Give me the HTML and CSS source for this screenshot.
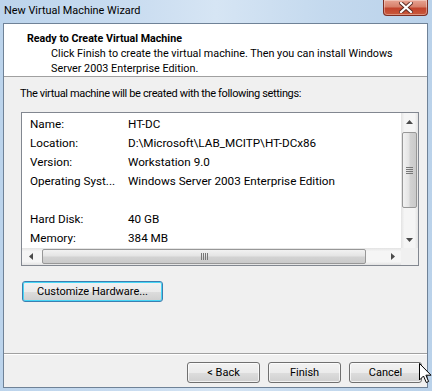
FILE: index.html
```html
<!DOCTYPE html>
<html>
<head>
<meta charset="utf-8">
<link rel="stylesheet" href="styles.css">
</head>
<body>
<div class="frame">
  <div class="titlebar">
    <span class="title">New Virtual Machine Wizard</span>
    <div class="close">
      <svg width="14" height="11" viewBox="0 0 14 11"><path d="M2 1 L12 10 M12 1 L2 10" stroke="#5a2a22" stroke-width="4" stroke-linecap="square"/><path d="M2 1 L12 10 M12 1 L2 10" stroke="#fff" stroke-width="2.2" stroke-linecap="square"/></svg>
    </div>
  </div>
  <div class="client">
    <div class="header">
      <div class="h-title">Ready to Create Virtual Machine</div>
      <div class="h-sub">Click Finish to create the virtual machine. Then you can install Windows<br>Server 2003 Enterprise Edition.</div>
    </div>
    <div class="body">
      <div class="intro">The virtual machine will be created with the following settings:</div>
      <div class="listbox">
        <div class="list-content">
          <div class="row"><span>Name:</span><span>HT-DC</span></div>
          <div class="row"><span>Location:</span><span>D:\Microsoft\LAB_MCITP\HT-DCx86</span></div>
          <div class="row"><span>Version:</span><span>Workstation 9.0</span></div>
          <div class="row"><span>Operating Syst...</span><span>Windows Server 2003 Enterprise Edition</span></div>
          <div class="row"></div>
          <div class="row"><span>Hard Disk:</span><span>40 GB</span></div>
          <div class="row"><span>Memory:</span><span>384 MB</span></div>
        </div>
        <div class="vscroll">
          <div class="arrow"><svg width="7" height="4" viewBox="0 0 7 4"><polygon points="3.5,0 7,4 0,4" fill="#4a4a4a"/></svg></div>
          <div class="vthumb"><svg width="7" height="7" viewBox="0 0 7 7"><path d="M0 .5H7M0 2.5H7M0 4.5H7M0 6.5H7" stroke="#777" stroke-width="1"/></svg></div>
          <div class="spacer"></div>
          <div class="arrow"><svg width="7" height="4" viewBox="0 0 7 4"><polygon points="0,0 7,0 3.5,4" fill="#4a4a4a"/></svg></div>
        </div>
        <div class="hscroll">
          <div class="arrow"><svg width="4" height="7" viewBox="0 0 4 7"><polygon points="0,3.5 4,0 4,7" fill="#4a4a4a"/></svg></div>
          <div class="hthumb"><svg width="7" height="7" viewBox="0 0 7 7"><path d="M.5 0V7M2.5 0V7M4.5 0V7M6.5 0V7" stroke="#777" stroke-width="1"/></svg></div>
          <div class="spacer"></div>
          <div class="arrow"><svg width="4" height="7" viewBox="0 0 4 7"><polygon points="0,0 4,3.5 0,7" fill="#4a4a4a"/></svg></div>
        </div>
        <div class="corner"></div>
      </div>
      <button class="btn btn-custom">Customize Hardware...</button>
    </div>
    <div class="footer">
      <button class="btn">&lt; Back</button>
      <button class="btn">Finish</button>
      <button class="btn">Cancel</button>
    </div>
  </div>
  <svg class="cursor" width="13" height="21" viewBox="0 0 13 21"><path d="M0.5 0.5 L0.5 17 L4.5 13 L7.3 19.5 L9.6 18.5 L6.9 12.2 L12 12.2 Z" fill="#fff" stroke="#000" stroke-width="1" stroke-linejoin="miter"/></svg>
</div>
</body>
</html>
```

FILE: styles.css
```css
* { box-sizing: border-box; }
html, body { margin: 0; padding: 0; }
body {
  width: 432px;
  height: 391px;
  overflow: hidden;
  font-family: Roboto, "Open Sans", sans-serif;
  font-size: 11px;
  color: #000;
}
.frame {
  position: relative;
  width: 432px;
  height: 391px;
  background: linear-gradient(90deg, #bcd4ec 0%, #c9dcf0 30%, #d6e5f4 50%, #c4d9ee 75%, #bad2ea 100%);
  padding: 0 4px 0 3px;
  display: flex;
  flex-direction: column;
}
.titlebar {
  height: 23px;
  display: flex;
  justify-content: space-between;
  align-items: flex-start;
}
.title {
  font-size: 10.9px;
  line-height: 21px;
  padding-left: 1px;
  color: #000;
}
.close {
  width: 45px;
  height: 16px;
  border: 1px solid #7c2e24;
  border-top: none;
  border-radius: 0 0 4px 4px;
  background: linear-gradient(180deg, #e8a493 0%, #d7806b 45%, #c2432c 55%, #c95a3c 100%);
  box-shadow: inset 0 0 0 1px rgba(255,255,255,0.35);
  display: flex;
  align-items: center;
  justify-content: center;
}
.client {
  height: 365px;
  border: 1px solid #6f8297;
  background: #f0f0f0;
  display: flex;
  flex-direction: column;
}
.header {
  background: #fff;
  height: 53px;
  border-bottom: 1px solid #a0a0a0;
  padding: 7px 0 0 23px;
  white-space: nowrap;
}
.h-title {
  font-weight: bold;
  font-size: 10.7px;
  line-height: 15px;
}
.h-sub {
  font-size: 10.8px;
  line-height: 15px;
  padding-left: 24px;
}
.body {
  flex: 1;
  padding: 9px 0 0 17px;
  display: flex;
  flex-direction: column;
  align-items: flex-start;
}
.intro {
  line-height: 15px;
  white-space: nowrap;
  letter-spacing: -0.35px;
  margin-left: -1px;
}
.listbox {
  margin-top: 11px;
  width: 398px;
  height: 154px;
  border: 1px solid #828790;
  background: #fff;
  display: grid;
  grid-template-columns: 1fr 17px;
  grid-template-rows: 1fr 17px;
}
.list-content {
  padding: 2px 0 0 8px;
  overflow: hidden;
  font-size: 11.7px;
}
.row {
  display: grid;
  grid-template-columns: 98px auto;
  height: 19px;
  line-height: 19px;
  white-space: nowrap;
}
.vscroll, .hscroll {
  display: flex;
  background: linear-gradient(90deg, #e3e3e3 0%, #f5f5f5 20%, #f5f5f5 80%, #e3e3e3 100%);
}
.vscroll { flex-direction: column; }
.hscroll {
  background: linear-gradient(180deg, #e3e3e3 0%, #f5f5f5 20%, #f5f5f5 80%, #e3e3e3 100%);
}
.arrow {
  width: 17px;
  height: 17px;
  flex: none;
  display: flex;
  align-items: center;
  justify-content: center;
}
.spacer { flex: 1; }
.vthumb {
  margin: 2px 1px 0;
  height: 76px;
  border: 1px solid #979797;
  border-radius: 2px;
  background: linear-gradient(90deg, #f2f2f2 0%, #e4e4e4 45%, #d2d2d2 55%, #cacaca 100%);
  display: flex;
  align-items: center;
  justify-content: center;
}
.hthumb {
  margin: 1px 0 1px 3px;
  width: 324px;
  border: 1px solid #979797;
  border-radius: 2px;
  background: linear-gradient(180deg, #f2f2f2 0%, #e4e4e4 45%, #d2d2d2 55%, #cacaca 100%);
  display: flex;
  align-items: center;
  justify-content: center;
}
.corner { background: #f0f0f0; }
.btn {
  font-family: inherit;
  font-size: 11px;
  color: #000;
  height: 21px;
  padding: 0;
  border: 1px solid #707070;
  border-radius: 3px;
  background: linear-gradient(180deg, #f2f2f2 0%, #ebebeb 50%, #dddddd 51%, #cfcfcf 100%);
  box-shadow: inset 0 0 0 1px rgba(255,255,255,0.7);
}
.btn-custom {
  margin-top: 15px;
  margin-left: 1px;
  width: 141px;
  border-color: #3c7fb1;
  box-shadow: inset 0 0 0 1px #48d6f6;
}
.footer {
  height: 34px;
  border-top: 1px solid #a0a0a0;
  box-shadow: inset 0 1px 0 #fff;
  display: flex;
  justify-content: flex-end;
  gap: 8px;
  padding: 8px 5px 0 0;
}
.footer .btn { width: 73px; }
.cursor {
  position: absolute;
  left: 419px;
  top: 363px;
}
```
